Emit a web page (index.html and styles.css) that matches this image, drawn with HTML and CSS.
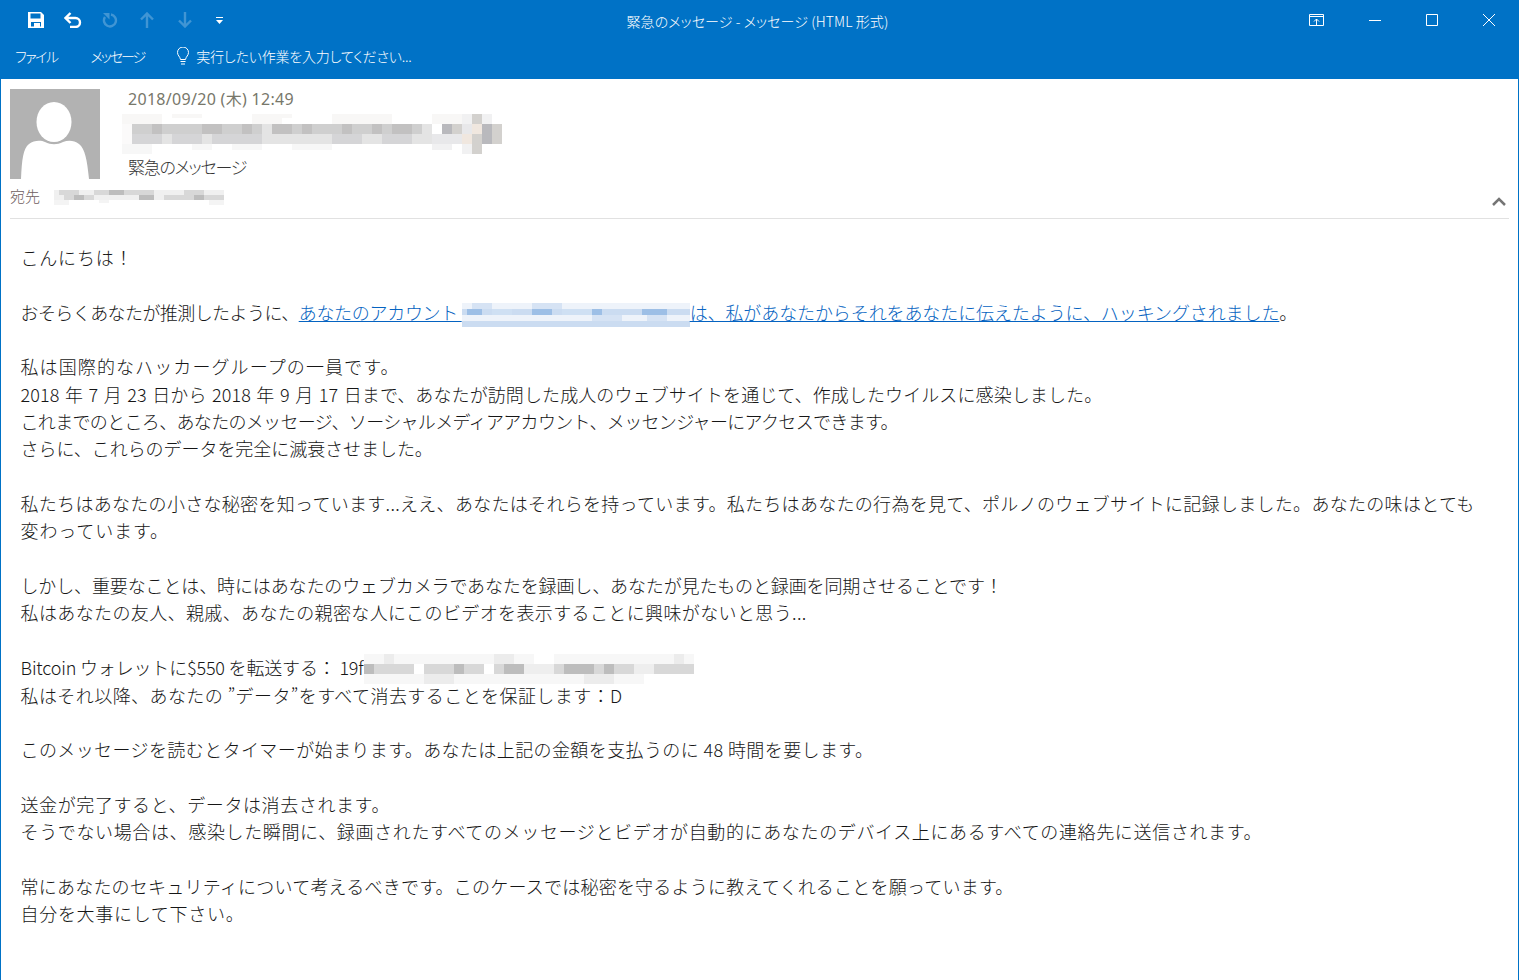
FILE: index.html
```html
<!DOCTYPE html>
<html lang="ja">
<head>
<meta charset="utf-8">
<title>緊急のメッセージ</title>
<link rel="stylesheet" href="styles.css">
</head>
<body>
<div class="window">
  <header class="chrome">
    <div class="titlebar">
      <div class="qat">
        <svg class="qi" width="16" height="16" viewBox="0 0 16 16"><path fill="#fff" d="M0 0h13l3 3v13H0z"/><path fill="#0072c6" d="M2.500 1.500h10v5h-10zM3 10h10v4.500h-1V11H6v3.500H3z"/></svg>
        <svg class="qi" width="18" height="16" viewBox="0 0 18 16"><path fill="none" stroke="#fff" stroke-width="2.400" d="M1.500 6h10a4.500 4.500 0 0 1 0 9H6M6.500 1l-5 5 5 5"/></svg>
        <svg class="qi dim" width="16" height="16" viewBox="0 0 16 16"><path fill="none" stroke="#fff" stroke-width="2.400" d="M9 2.500a6 6 0 1 1-6 2.500"/><path fill="#fff" d="M1 1h6.500v6.500z"/></svg>
        <svg class="qi dim arrow" width="14" height="16" viewBox="0 0 14 16"><path fill="none" stroke="#fff" stroke-width="2.400" d="M7 16V2M1 7.500l6-6 6 6"/></svg>
        <svg class="qi dim arrow" width="14" height="16" viewBox="0 0 14 16"><path fill="none" stroke="#fff" stroke-width="2.400" d="M7 0v14M1 8.500l6 6 6-6"/></svg>
        <svg class="qi more" width="7" height="7" viewBox="0 0 7 7"><path fill="#fff" d="M0 0h7v1H0zM0 3h7L3.500 7z"/></svg>
      </div>
      <div class="doc-title">緊急のメッセージ - メッセージ (HTML 形式)</div>
      <div class="winctl">
        <svg width="15" height="12" viewBox="0 0 15 12"><path fill="none" stroke="#fff" d="M.5.500h14v11H.5zM.5 2.500h14M7.500 11.500V5M5 7.500 7.500 5 10 7.500"/></svg>
        <svg width="12" height="1" viewBox="0 0 12 1"><path fill="#fff" d="M0 0h12v1H0z"/></svg>
        <svg width="12" height="12" viewBox="0 0 12 12"><path fill="none" stroke="#fff" d="M.5.500h11v11H.5z"/></svg>
        <svg width="12" height="12" viewBox="0 0 12 12"><path fill="none" stroke="#fff" d="M0 0l12 12M12 0 0 12"/></svg>
      </div>
    </div>
    <nav class="tabs">
      <span class="tab file">ファイル</span>
      <span class="tab msg">メッセージ</span>
      <svg class="bulb" width="12" height="18" viewBox="0 0 12 18"><path fill="none" stroke="#fff" d="M3.500 12.500C3 9.500.5 8.500.5 5.500a5.500 5.500 0 0 1 11 0c0 3-2.500 4-3 7z"/><path fill="#fff" d="M3.500 14h5v1h-5zM4 16.500h4v1H4z"/></svg>
      <span class="tell">実行したい作業を入力してください...</span>
    </nav>
  </header>
  <main class="mail">
    <section class="head">
      <svg class="avatar" width="90" height="90" viewBox="0 0 90 90"><path fill="#b2b2b2" d="M0 0h90v90H0z"/><ellipse fill="#fff" cx="44" cy="33" rx="17.500" ry="20"/><path fill="#fff" d="M11 90c1-20 2-30 8-35 5-4 12-4 16-2 6 3 12 3 18 0 5-2 11-2 16 2 6 5 8 15 10 35z"/></svg>
      <div class="meta">
        <div class="date">2018/09/20 (木) 12:49</div>
        <svg class="sender" width="380" height="40" viewBox="0 0 380 40">
          <path fill="#f8f7f6" d="M0 0h40v10H0zM50 0h30v4H50zM130 0h30v10h-30zM150 0h20v4h-20zM210 0h60v10h-60zM310 0h30v10h-30zM300 10h10v20h-10z"/>
          <path fill="#fbfafa" d="M0 10h10v20H0z"/>
          <path fill="#e4e4e4" d="M10 10h300v20H10z"/>
          <path fill="#cfcfcf" d="M10 10h20v10H10zM40 10h40v10H40zM100 10h20v10h-20zM130 10h10v10h-10zM170 10h10v10h-10zM190 10h30v10h-30zM230 10h20v10h-20zM260 10h10v10h-10zM290 10h10v10h-10z"/>
          <path fill="#c2c1c1" d="M30 10h10v10H30zM80 10h20v10H80zM120 10h10v10h-10zM150 10h20v10h-20zM180 10h10v10h-10zM220 10h10v10h-10zM250 10h10v10h-10zM270 10h20v10h-20z"/>
          <path fill="#d5d5d7" d="M10 20h30v10H10zM50 20h30v10H50zM90 20h50v10H90zM210 20h30v10h-30zM260 20h30v10h-30z"/>
          <path fill="#f7f7f7" d="M0 30h30v10H0zM70 30h20v6H70zM110 30h30v6h-30zM170 30h40v6h-40z"/>
          <path fill="#e8e8ea" d="M310 20h60v10h-60zM340 10h10v10h-10z"/>
          <path fill="#b9b9bd" d="M320 10h10v10h-10zM360 10h10v20h-10z"/>
          <path fill="#d3d1ce" d="M330 10h10v10h-10zM350 0h10v40h-10zM370 10h10v20h-10z"/>
          <path fill="#f0e7df" d="M340 20h10v10h-10zM350 10h10v10h-10z"/>
          <path fill="#f1f1f2" d="M340 0h10v10h-10zM360 0h10v10h-10zM340 30h10v10h-10zM310 30h20v6h-20z"/>
        </svg>
        <div class="subject">緊急のメッセージ</div>
      </div>
    </section>
    <div class="to-row">
      <span class="to-label">宛先</span>
      <svg class="to-blur" width="170" height="15" viewBox="0 0 170 15"><path fill="#f0f0f0" d="M0 0h170v10H0z"/><path fill="#d8d8d8" d="M5 0h20v5H5zM40 0h20v5H40zM70 0h30v5H70zM130 0h20v5h-20zM10 5h30v5H10zM110 5h30v5h-30zM150 5h20v5h-20z"/><path fill="#bdbdbd" d="M55 0h15v5H55zM85 5h15v5H85zM140 5h10v5h-10zM20 5h10v5H20z"/><path fill="#f4f4f4" d="M0 10h15v5H0zM45 10h10v3H45zM155 10h15v5h-15z"/></svg>
      <svg class="collapse" width="14" height="9" viewBox="0 0 14 9"><path fill="none" stroke="#757575" stroke-width="2.500" d="M1 8l6-6 6 6"/></svg>
    </div>
    <article class="body">
      <p class="l t-greeting">こんにちは！</p>
      <p class="l">&nbsp;</p>
      <p class="l"><span class="t-intro">おそらくあなたが推測したように、</span><a class="link"><span class="t-account">あなたのアカウント </span><svg class="blur-link" width="228" height="24" viewBox="0 0 228 24"><path fill="#cbdcf1" d="M0 0h228v24H0z"/><path fill="#eef3fa" d="M0 0h228v6H0zM0 12h228v6H0z"/><path fill="#d6e3f4" d="M10 0h20v6H10zM70 0h30v6H70zM130 12h30v6h-30zM185 12h20v6h-20z"/><path fill="#cfe0f3" d="M30 6h20v6H30zM100 6h30v6h-30z"/><path fill="#9dbfe6" d="M5 6h15v6H5zM70 6h20v6H70zM130 6h10v6h-10zM180 6h25v6h-25z"/></svg><span class="t-hacked">は、私があなたからそれをあなたに伝えたように、ハッキングされました</span></a>。</p>
      <p class="l">&nbsp;</p>
      <p class="l t-member">私は国際的なハッカーグループの一員です。</p>
      <p class="l t-dates">2018 年 7 月 23 日から 2018 年 9 月 17 日まで、あなたが訪問した成人のウェブサイトを通じて、作成したウイルスに感染しました。</p>
      <p class="l t-access">これまでのところ、あなたのメッセージ、ソーシャルメディアアカウント、メッセンジャーにアクセスできます。</p>
      <p class="l t-data">さらに、これらのデータを完全に滅衰させました。</p>
      <p class="l">&nbsp;</p>
      <p class="l t-secret">私たちはあなたの小さな秘密を知っています...ええ、あなたはそれらを持っています。私たちはあなたの行為を見て、ポルノのウェブサイトに記録しました。あなたの味はとても</p>
      <p class="l t-changed">変わっています。</p>
      <p class="l">&nbsp;</p>
      <p class="l t-webcam">しかし、重要なことは、時にはあなたのウェブカメラであなたを録画し、あなたが見たものと録画を同期させることです！</p>
      <p class="l t-friends">私はあなたの友人、親戚、あなたの親密な人にこのビデオを表示することに興味がないと思う...</p>
      <p class="l">&nbsp;</p>
      <p class="l t-bitcoin">Bitcoin ウォレットに$550 を転送する： 19f<svg class="blur-btc" width="330" height="30" viewBox="0 0 330 30"><path fill="#f7f7f7" d="M0 0h330v30H0z"/><path fill="#fff" d="M170 0h20v10h-20zM280 20h50v10h-50z"/><path fill="#ececec" d="M20 0h10v10H20zM130 0h20v10h-20zM310 0h10v10h-10zM60 20h30v10H60zM220 20h30v10h-30z"/><path fill="#d8d8d8" d="M0 10h330v10H0z"/><path fill="#bdbdbd" d="M140 10h20v10h-20zM200 10h30v10h-30zM240 10h10v10h-10zM0 10h10v10H0zM90 10h10v10H90z"/><path fill="#fff" d="M50 10h10v10H50zM120 10h10v10h-10z"/><path fill="#eee" d="M160 10h30v10h-30zM270 10h20v10h-20z"/></svg></p>
      <p class="l t-erase">私はそれ以降、あなたの ”データ”をすべて消去することを保証します：D</p>
      <p class="l">&nbsp;</p>
      <p class="l t-timer">このメッセージを読むとタイマーが始まります。あなたは上記の金額を支払うのに 48 時間を要します。</p>
      <p class="l">&nbsp;</p>
      <p class="l t-sent">送金が完了すると、データは消去されます。</p>
      <p class="l t-else">そうでない場合は、感染した瞬間に、録画されたすべてのメッセージとビデオが自動的にあなたのデバイス上にあるすべての連絡先に送信されます。</p>
      <p class="l">&nbsp;</p>
      <p class="l t-security">常にあなたのセキュリティについて考えるべきです。このケースでは秘密を守るように教えてくれることを願っています。</p>
      <p class="l t-care">自分を大事にして下さい。</p>
    </article>
  </main>
</div>
</body>
</html>
```
FILE: styles.css
```css
* { box-sizing: border-box; }
html, body { margin: 0; height: 100%; overflow: hidden; }
body { font-family: "Noto Sans CJK JP", "Noto Sans", sans-serif; font-weight: 300; background: #fff; color: #222; }
.window { height: 980px; border-left: 1px solid #0072c6; border-right: 1px solid #0072c6; display: flex; flex-direction: column; }
.chrome { background: #0072c6; color: #fff; height: 79px; margin: 0 -1px; flex: none; }
.titlebar { height: 40px; display: flex; align-items: center; position: relative; padding: 0 24px 0 28px; }
.qat { display: flex; align-items: center; gap: 20px; width: 400px; }
.qi { flex: none; }
.qi.dim { opacity: .25; }
.arrow { margin-left: 2px; margin-right: 2px; }
.more { margin-left: 2px; }
.doc-title { position: absolute; left: 0; right: 0; text-align: center; font-size: 14px; letter-spacing: .1px; padding-right: 4px; top: 11px; line-height: 20px; font-feature-settings: "palt"; }
.winctl { margin-left: auto; display: flex; align-items: center; gap: 45px; }
.tabs { display: flex; align-items: center; height: 34px; font-size: 14px; font-feature-settings: "palt"; padding: 0 0 2px 15px; }
.tab.file { letter-spacing: -1.500px; }
.tab.msg { margin-left: 33px; letter-spacing: -2px; }
.bulb { margin-left: 33px; margin-right: 7px; }
.tell { letter-spacing: -.2px; }
.mail { flex: 1; padding: 10px 9px 0; }
.head { display: flex; height: 90px; }
.avatar { flex: none; }
.meta { margin-left: 28px; display: flex; flex-direction: column; }
.date { font-size: 16px; font-weight: 400; letter-spacing: .3px; line-height: 20px; color: #77776a; font-family: "Noto Sans", "Noto Sans CJK JP", sans-serif; }
.sender { margin: 5px 0 0 -6px; display: block; height: 40px; }
.subject { font-size: 17px; letter-spacing: -1.200px; line-height: 24px; color: #333; font-feature-settings: "palt"; margin-top: 1px; }
.to-row { display: flex; align-items: center; height: 40px; border-bottom: 1px solid #e1e1e1; padding: 0 3px 2px 0; }
.to-label { font-size: 15px; color: #6e5e5e; width: 44px; margin-bottom: 4px; }
.to-blur { flex: none; }
.collapse { margin-left: auto; margin-top: 8px; }
.body { padding: 25px 0 0 10.500px; font-size: 18px; color: #161616; }
.l { margin: 0; height: 27.350px; line-height: 27.350px; white-space: nowrap; }
.link { color: #0563c1; text-decoration: underline; }
.blur-link { vertical-align: -7px; }
.blur-btc { vertical-align: 1px; margin-top: -10px; margin-bottom: -10px; }

.t-greeting { letter-spacing: .8px; }
.t-intro { letter-spacing: -.58px; }
.t-account { letter-spacing: -.3px; }
.t-hacked { letter-spacing: -.1px; }
.t-member { letter-spacing: 1.100px; }
.t-dates { letter-spacing: .1px; word-spacing: 1.400px; }
.t-access { letter-spacing: -.67px; }
.t-data { letter-spacing: -.05px; }
.t-secret { letter-spacing: .3px; }
.t-changed { letter-spacing: .9px; }
.t-webcam { letter-spacing: -.13px; }
.t-friends { letter-spacing: .38px; }
.t-bitcoin { letter-spacing: -.17px; }
.t-erase { letter-spacing: .43px; }
.t-timer { letter-spacing: .4px; }
.t-sent { letter-spacing: .6px; }
.t-else { letter-spacing: .64px; }
.t-security { letter-spacing: .22px; }
.t-care { letter-spacing: .7px; }
```
